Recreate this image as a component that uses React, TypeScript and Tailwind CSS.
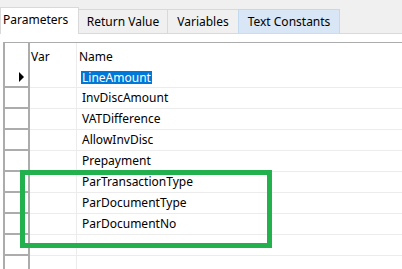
import React from 'react'

const FONT = { fontFamily: "'Noto Sans', 'Open Sans', sans-serif" }

const rows = [
  'LineAmount',
  'InvDiscAmount',
  'VATDifference',
  'AllowInvDisc',
  'Prepayment',
  'ParTransactionType',
  'ParDocumentType',
  'ParDocumentNo',
  '',
  '',
]

function Tab({ label, width, selected, hover }: { label: string; width: string; selected?: boolean; hover?: boolean }) {
  if (selected) {
    return (
      <div className={`${width} h-[27px] -mb-px relative z-10 bg-white border border-b-0 border-[#d9d9d9] flex items-center pl-[2px] pb-[3px]`}>
        {label}
      </div>
    )
  }
  return (
    <div
      className={`${width} h-[24px] -ml-px border border-b-0 flex items-center justify-center ${
        hover ? 'bg-[#d8e6f5] border-[#c3d9ef]' : 'bg-[#f0f0f0] border-[#d9d9d9]'
      }`}
    >
      {label}
    </div>
  )
}

export default function App() {
  return (
    <div className="w-[402px] h-[269px] bg-white overflow-hidden relative text-[12px] text-black" style={FONT}>
      {/* tab strip */}
      <div className="h-[34px] bg-[#f0f0f0] border-b border-[#d9d9d9] flex items-end">
        <Tab label="Parameters" width="w-[79px]" selected />
        <Tab label="Return Value" width="w-[90px]" />
        <Tab label="Variables" width="w-[72px]" />
        <Tab label="Text Constants" width="w-[102px]" hover />
      </div>

      {/* grid */}
      <div className="pt-[8px] pl-[3px]">
        <div className="border-t border-l-2 border-[#acacac]">
          {/* header */}
          <div className="flex h-[24px]">
            <div className="w-[25px] border-r-2 border-[#acacac]" />
            <div className="w-[47px] border-r border-[#ececec] flex items-center pl-[1px] pt-[3px]">Var</div>
            <div className="flex-1 flex items-center pl-[2px] pt-[3px]">Name</div>
          </div>
          {rows.map((name, i) => (
            <div key={i} className="flex h-[21px]">
              <div className="w-[25px] border-r-2 border-b-2 border-[#acacac] flex items-center">
                {i === 0 && (
                  <svg width="6" height="10" viewBox="0 0 6 10" className="ml-[14px]">
                    <path d="M0 0 L5 5 L0 10 Z" fill="#000" />
                  </svg>
                )}
              </div>
              <div className="w-[47px] border-r border-b border-[#ececec]" />
              <div className="flex-1 border-b border-[#ececec] flex items-center pl-[4px]">
                {i === 0 ? (
                  <span className="bg-[#0078d7] text-white px-px leading-[13px]">{name}</span>
                ) : (
                  <span className="px-px">{name}</span>
                )}
              </div>
            </div>
          ))}
        </div>
      </div>

      {/* green highlight box drawn over the grid */}
      <div className="absolute left-[20px] top-[170px] w-[252px] h-[78px] border-[5px] border-[#22b14c]" />
    </div>
  )
}
